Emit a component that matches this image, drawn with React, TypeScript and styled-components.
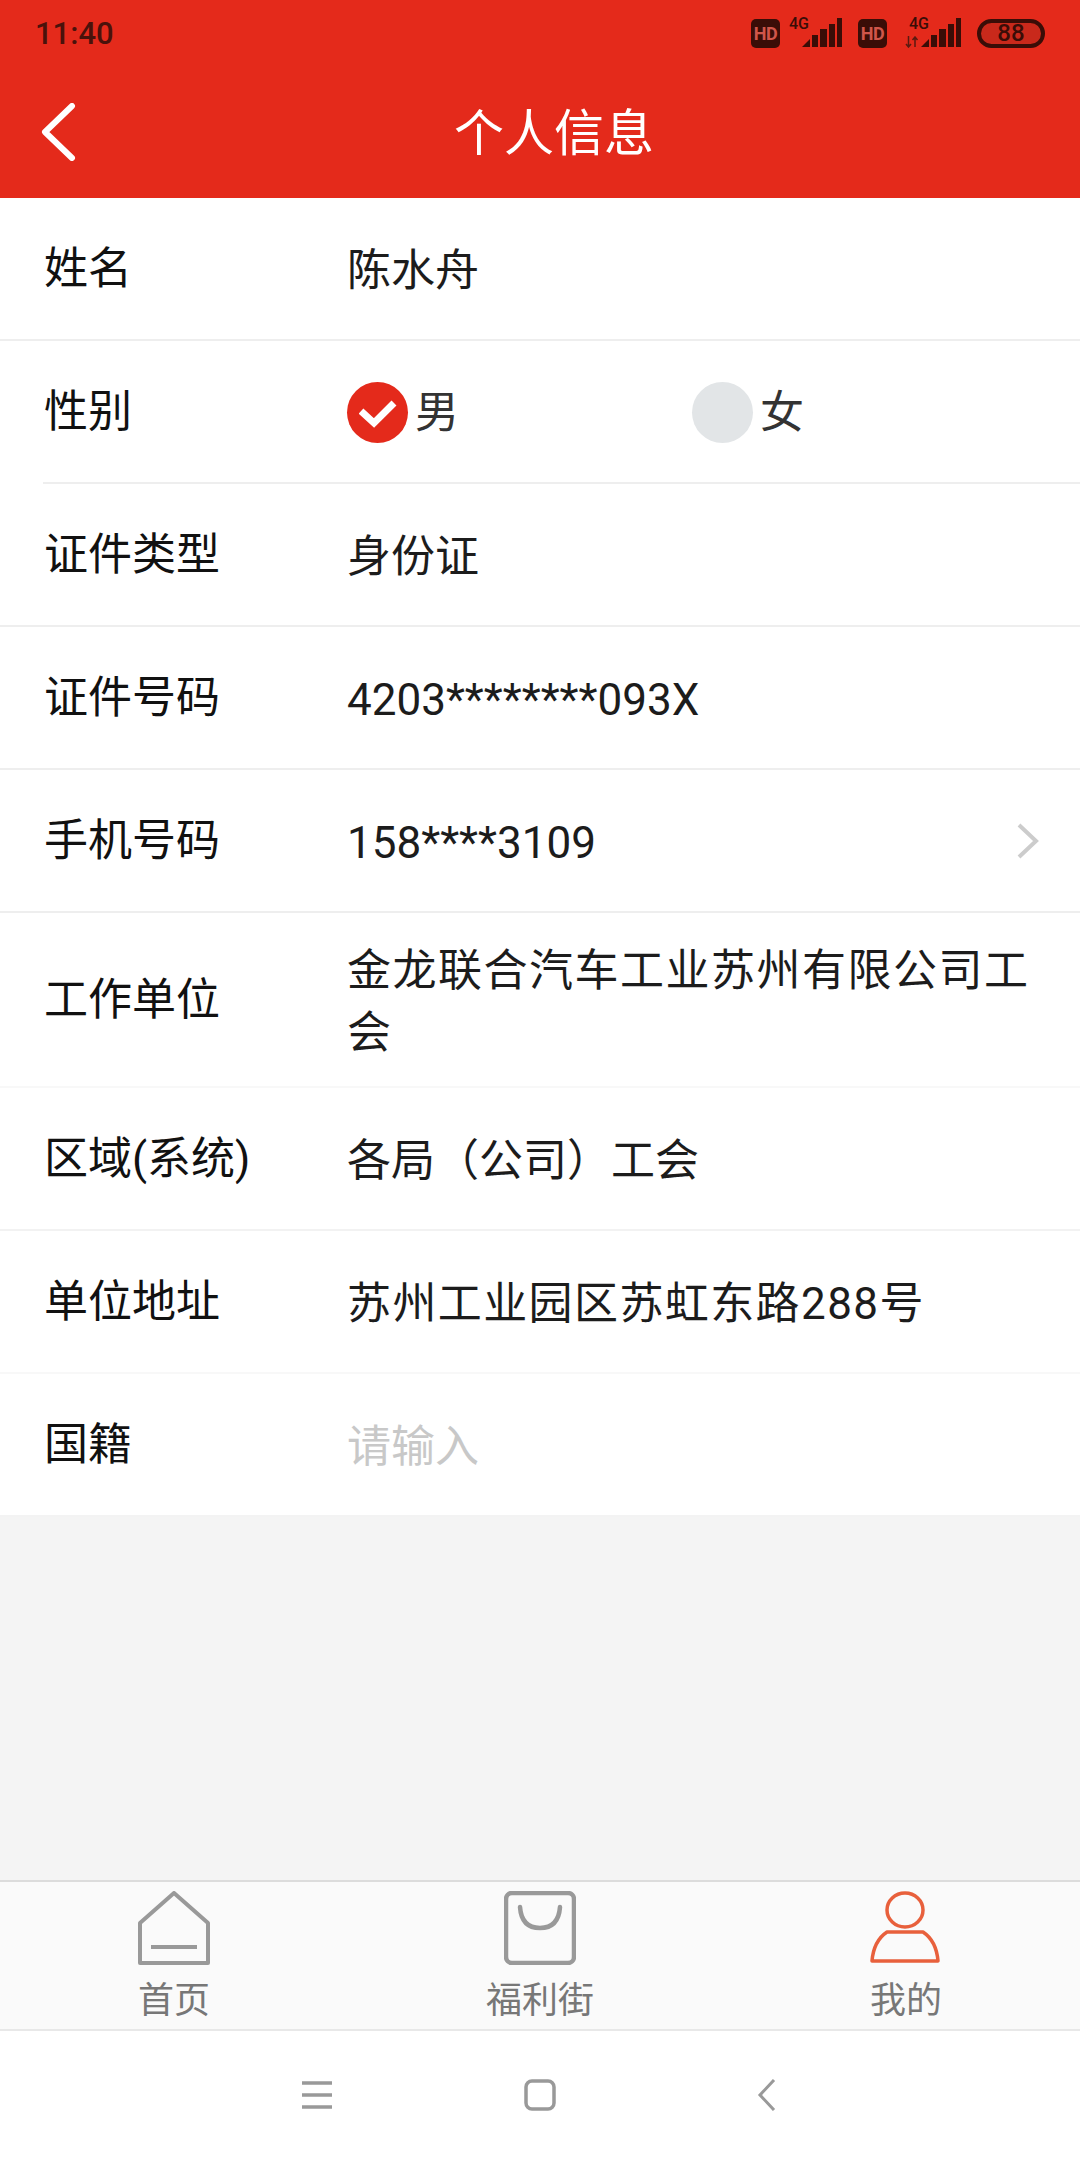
import React from "react";
import styled, { createGlobalStyle } from "styled-components";

const Global = createGlobalStyle`
  html, body { margin: 0; padding: 0; background: #f4f4f4; }
  body { font-family: Roboto, "Noto Sans CJK SC", sans-serif; }
  * { box-sizing: border-box; }
`;

const Page = styled.div`
  width: 1080px;
  height: 2160px;
  display: flex;
  flex-direction: column;
  background: #f4f4f4;
  overflow: hidden;
`;

const Header = styled.header`
  height: 198px;
  flex: none;
  background: #e42a1b;
  display: flex;
  flex-direction: column;
`;

const StatusBar = styled.div`
  height: 66px;
  display: flex;
  align-items: center;
  padding: 0 35px 0 35px;
  color: #4a120b;
`;

const Time = styled.span`
  font-size: 31px;
  font-weight: 500;
  line-height: 66px;
  padding-top: 2px;
  flex: 1;
`;

const StatusIcons = styled.div`
  display: flex;
  align-items: center;
`;

const HdBadge = styled.span<{ $gap: number }>`
  width: 29px;
  height: 29px;
  border-radius: 5px;
  background: #3a0d07;
  color: #d0564a;
  font-size: 18px;
  font-weight: 700;
  letter-spacing: -0.5px;
  display: flex;
  align-items: center;
  justify-content: center;
  margin-right: ${(p) => p.$gap}px;
`;

const Signal = styled.div<{ $gap: number; $w: number }>`
  position: relative;
  width: ${(p) => p.$w}px;
  height: 30px;
  margin-right: ${(p) => p.$gap}px;
`;

const SignalLabel = styled.span<{ $left: number }>`
  position: absolute;
  left: ${(p) => p.$left}px;
  top: -2px;
  font-size: 16px;
  line-height: 16px;
  font-weight: 500;
  color: #3a0d07;
`;

const Battery = styled.div`
  width: 68px;
  height: 29px;
  border: 4px solid #3a0d07;
  border-radius: 15px;
  background: #c9291b;
  color: #3a0d07;
  font-size: 24px;
  font-weight: 500;
  line-height: 21px;
  text-align: center;
`;

const TitleBar = styled.div`
  flex: 1;
  position: relative;
  display: flex;
  align-items: center;
  justify-content: center;
  padding: 4px 0 0 28px;
`;

const BackButton = styled.span`
  position: absolute;
  left: 40px;
  top: 37px;
  display: flex;
`;

const Title = styled.h1`
  margin: 0;
  color: #fff;
  font-size: 50px;
  font-weight: 400;
  line-height: 60px;
`;

const Form = styled.main`
  background: #fff;
  flex: none;
`;

const Row = styled.div<{ $h?: number; $inset?: boolean; $line?: string }>`
  height: ${(p) => p.$h ?? 143}px;
  margin-left: ${(p) => (p.$inset ? 43 : 0)}px;
  padding: 0 40px 0 ${(p) => (p.$inset ? 1 : 44)}px;
  border-bottom: 2px solid ${(p) => p.$line ?? "#eeeeee"};
  display: flex;
  align-items: center;
`;

const Label = styled.div`
  width: 303px;
  flex: none;
  color: #111;
  font-size: 44px;
  line-height: 62px;
`;

const Value = styled.div<{ $muted?: boolean; $spread?: number }>`
  flex: 1;
  color: ${(p) => (p.$muted ? "#c8c8c8" : "#1c1c1c")};
  font-size: 44px;
  line-height: 62px;
  padding-top: 5px;
  letter-spacing: ${(p) => p.$spread ?? 0}px;
`;

const Options = styled.div`
  flex: 1;
  display: flex;
  align-items: center;
  padding-top: 2px;
`;

const Option = styled.div`
  width: 345px;
  display: flex;
  align-items: center;
  gap: 7px;
  color: #333;
  font-size: 44px;
  line-height: 62px;
`;

const RadioOn = styled.span`
  width: 61px;
  height: 61px;
  border-radius: 50%;
  background: #e42a1b;
  display: flex;
  align-items: center;
  justify-content: center;
`;

const RadioOff = styled.span`
  width: 61px;
  height: 61px;
  border-radius: 50%;
  background: #e2e5e7;
`;

const Spacer = styled.div`
  flex: 1;
`;

const TabBar = styled.nav`
  height: 151px;
  flex: none;
  background: #fafafa;
  border-top: 2px solid #dcdcdc;
  border-bottom: 2px solid #e8e8e8;
  display: grid;
  grid-template-columns: repeat(3, 1fr);
  margin: 0 -9px;
`;

const Tab = styled.div`
  display: flex;
  flex-direction: column;
  align-items: center;
  padding-top: 9px;
  color: #777;
  font-size: 36px;
  line-height: 44px;
`;

const TabIcon = styled.svg`
  width: 72px;
  height: 74px;
  margin-bottom: 14px;
  flex: none;
`;

const SystemNav = styled.div`
  height: 129px;
  flex: none;
  background: #fff;
  display: flex;
  align-items: center;
  padding: 0 0 2px 301px;
`;

const NavIcon = styled.svg<{ $gap?: number }>`
  flex: none;
  margin-right: ${(p) => p.$gap ?? 0}px;
`;

function Bars({ x }: { x: number }) {
  return (
    <svg width="40" height="30" viewBox="0 0 40 30" style={{ position: "absolute", left: x, top: 0 }}>
      <path d="M0 29 L8 21 V29Z" fill="#3a0d07" />
      <rect x="10" y="17" width="6" height="12" fill="#3a0d07" />
      <rect x="18" y="11" width="7" height="18" fill="#3a0d07" />
      <rect x="27" y="6" width="6" height="23" fill="#3a0d07" />
      <rect x="35" y="0" width="5" height="29" fill="#3a0d07" />
    </svg>
  );
}

export default function App() {
  return (
    <Page>
      <Global />
      <Header>
        <StatusBar>
          <Time>11:40</Time>
          <StatusIcons>
            <HdBadge $gap={9}>HD</HdBadge>
            <Signal $gap={16} $w={53}>
              <SignalLabel $left={0}>4G</SignalLabel>
              <Bars x={13} />
            </Signal>
            <HdBadge $gap={18}>HD</HdBadge>
            <Signal $gap={16} $w={56}>
              <SignalLabel $left={4}>4G</SignalLabel>
              <svg width="14" height="12" viewBox="0 0 14 12" fill="none" style={{ position: "absolute", left: 0, top: 18 }}>
                <path d="M3.5 0 V11 M1 8 L3.5 11 L6 8 M10 11 V1 M7.5 4 L10 1 L12.5 4" stroke="#5a1a10" strokeWidth="1.5" />
              </svg>
              <Bars x={16} />
            </Signal>
            <Battery>88</Battery>
          </StatusIcons>
        </StatusBar>
        <TitleBar>
          <BackButton>
            <svg width="36" height="58" viewBox="0 0 36 58" fill="none">
              <path d="M32 3 L5 29 L32 55" stroke="#fff" strokeWidth="6" strokeLinecap="round" strokeLinejoin="round" />
            </svg>
          </BackButton>
          <Title>个人信息</Title>
        </TitleBar>
      </Header>

      <Form>
        <Row>
          <Label>姓名</Label>
          <Value>陈水舟</Value>
        </Row>
        <Row $inset>
          <Label>性别</Label>
          <Options>
            <Option>
              <RadioOn>
                <svg width="38" height="30" viewBox="0 0 38 30" fill="none">
                  <path d="M2 13 L15 25 L35 5" stroke="#fff" strokeWidth="7" />
                </svg>
              </RadioOn>
              男
            </Option>
            <Option>
              <RadioOff />
              女
            </Option>
          </Options>
        </Row>
        <Row>
          <Label>证件类型</Label>
          <Value>身份证</Value>
        </Row>
        <Row>
          <Label>证件号码</Label>
          <Value>4203********093X</Value>
        </Row>
        <Row>
          <Label>手机号码</Label>
          <Value>158****3109</Value>
          <svg width="24" height="38" viewBox="0 0 24 38" fill="none">
            <path d="M3 3 L20 19 L3 35" stroke="#cccccc" strokeWidth="4" />
          </svg>
        </Row>
        <Row $h={175} $line="#f8f8f8">
          <Label>工作单位</Label>
          <Value $spread={1.5}>金龙联合汽车工业苏州有限公司工会</Value>
        </Row>
        <Row $line="#f2f2f2">
          <Label>区域(系统)</Label>
          <Value>各局（公司）工会</Value>
        </Row>
        <Row $line="#f8f8f8">
          <Label>单位地址</Label>
          <Value $spread={1.4}>苏州工业园区苏虹东路288号</Value>
        </Row>
        <Row $line="#f3f3f3">
          <Label>国籍</Label>
          <Value $muted>请输入</Value>
        </Row>
      </Form>

      <Spacer />

      <TabBar>
        <Tab>
          <TabIcon viewBox="0 0 72 74" fill="none">
            <path d="M2 72 V32 L36 2 L70 32 V72 Z" stroke="#999" strokeWidth="4" strokeLinejoin="round" />
            <path d="M13 56 H59" stroke="#999" strokeWidth="4" />
          </TabIcon>
          首页
        </Tab>
        <Tab>
          <TabIcon viewBox="0 0 72 74" fill="none">
            <rect x="2" y="2" width="68" height="70" rx="6" stroke="#999" strokeWidth="4.5" />
            <path d="M16 16 C17 30 24 37 36 37 C48 37 55 30 56 16" stroke="#999" strokeWidth="4.5" strokeLinecap="round" />
          </TabIcon>
          福利街
        </Tab>
        <Tab>
          <TabIcon viewBox="0 0 72 74" fill="none">
            <ellipse cx="35" cy="19" rx="18" ry="17" stroke="#e8603c" strokeWidth="3.5" />
            <path d="M17 41 H53 C62 47 67 58 68 70 H2 C3 58 8 47 17 41 Z" stroke="#e8603c" strokeWidth="3.5" strokeLinejoin="round" />
          </TabIcon>
          我的
        </Tab>
      </TabBar>

      <SystemNav>
        <NavIcon width="32" height="28" viewBox="0 0 32 28" $gap={191}>
          <path d="M1 2 H31 M1 14 H31 M1 26 H31" stroke="#999" strokeWidth="3.5" />
        </NavIcon>
        <NavIcon width="32" height="32" viewBox="0 0 32 32" fill="none" $gap={201}>
          <rect x="2" y="2" width="28" height="28" rx="6" stroke="#999" strokeWidth="3.5" />
        </NavIcon>
        <NavIcon width="20" height="32" viewBox="0 0 20 32" fill="none">
          <path d="M17 1 L3 16 L17 31" stroke="#999" strokeWidth="3" />
        </NavIcon>
      </SystemNav>
    </Page>
  );
}
